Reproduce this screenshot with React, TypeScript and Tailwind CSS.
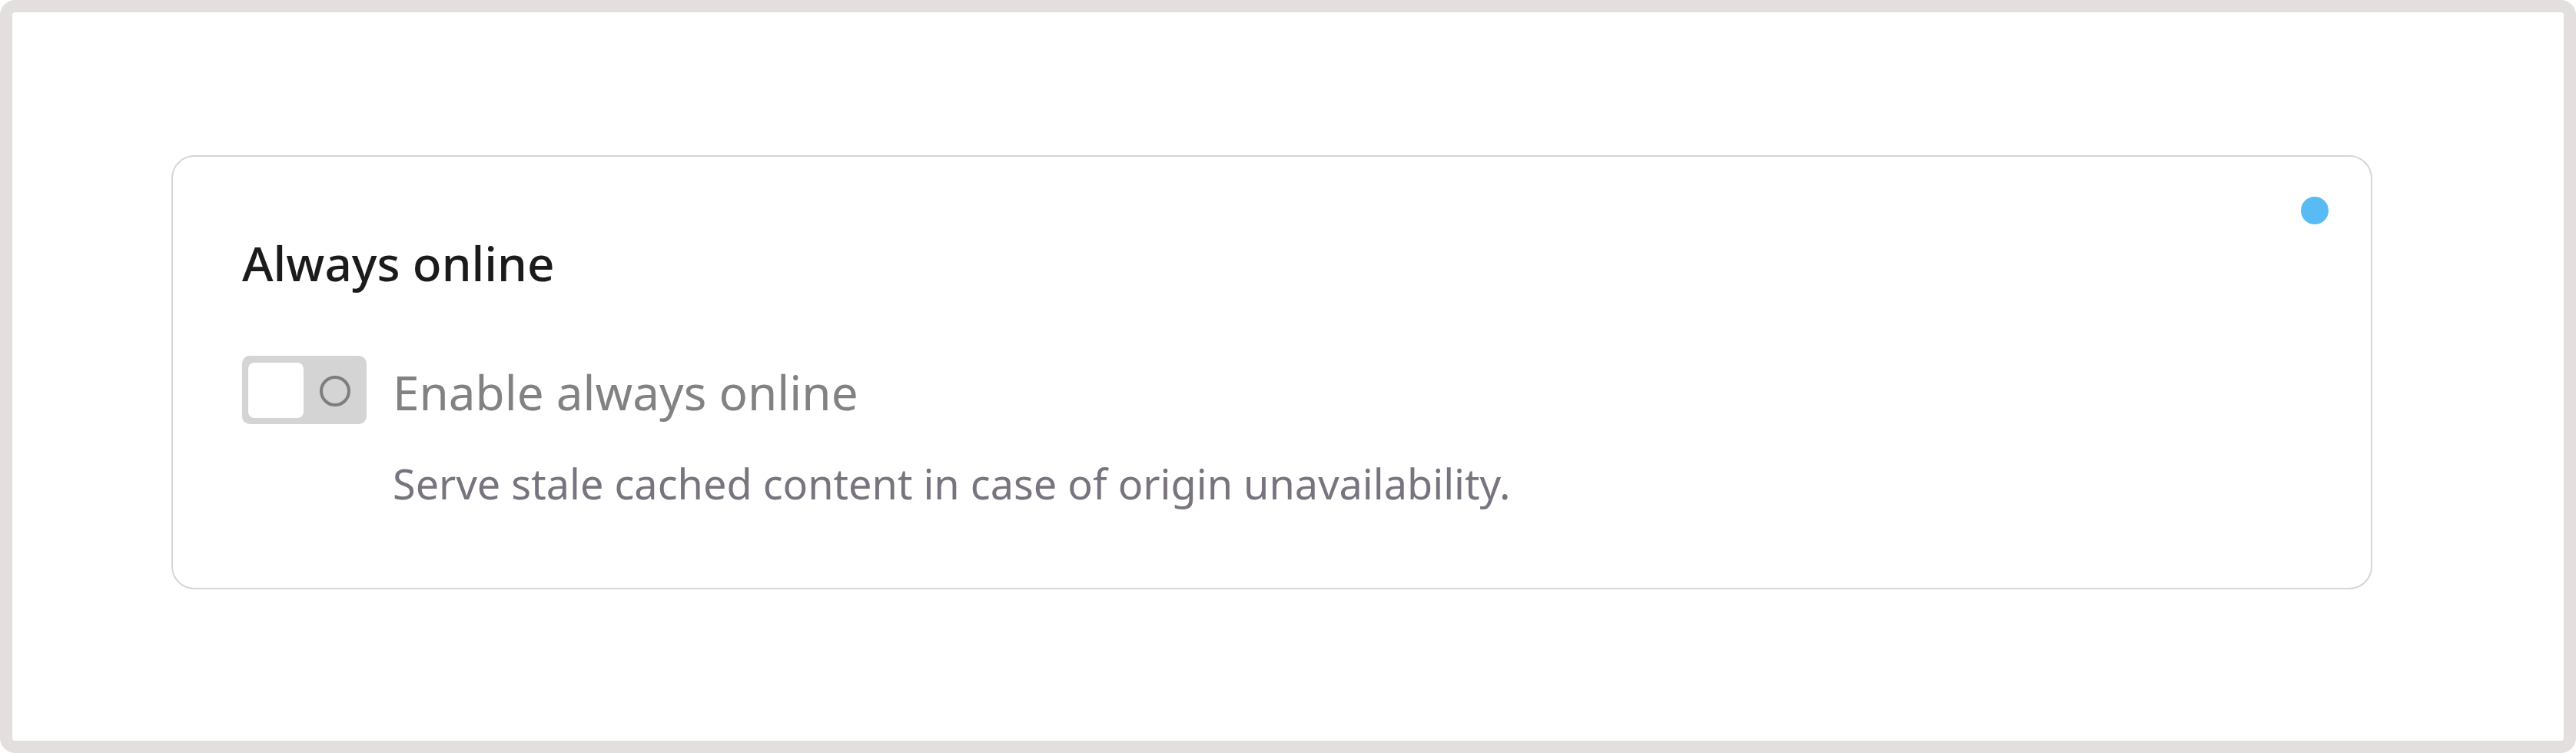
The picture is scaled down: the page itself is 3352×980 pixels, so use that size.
export default function App() {
  return (
    <div
      className="h-[980px] w-[3352px] rounded-[20px] border-[16px] border-[#e3dfdf] bg-white pt-[186px] pl-[207px] pr-[249px]"
      style={{ fontFamily: '"Noto Sans", "Open Sans", sans-serif' }}
    >
      <div className="relative rounded-[30px] border-2 border-[#d6d5db] bg-white pl-[90px] pt-[98px] pb-[101px]">
        <span className="absolute right-[55px] top-[52px] h-[36px] w-[36px] rounded-full bg-[#59bbf4]" />

        <h2 className="text-[62px] leading-[80px] font-medium text-[#1b1b1b]">Always online</h2>

        <div className="mt-[81px] flex items-center gap-[34px]">
          <button className="flex h-[89px] w-[162px] items-center justify-between rounded-[10px] bg-[#d4d4d4] pl-[8px] pr-[19px]">
            <span className="h-[72px] w-[72px] rounded-[8px] bg-white" />
            <svg width="44" height="44" viewBox="0 0 44 44" className="mt-[2px]">
              <circle cx="22" cy="22" r="18" fill="none" stroke="#7e7e7e" strokeWidth="4" />
            </svg>
          </button>
          <span className="mt-[4px] text-[62px] leading-[80px] text-[#828282]">Enable always online</span>
        </div>

        <p className="mt-[42px] pl-[196px] text-[54px] leading-[70px] text-[#78737e]">
          Serve stale cached content in case of origin unavailability.
        </p>
      </div>
    </div>
  );
}
